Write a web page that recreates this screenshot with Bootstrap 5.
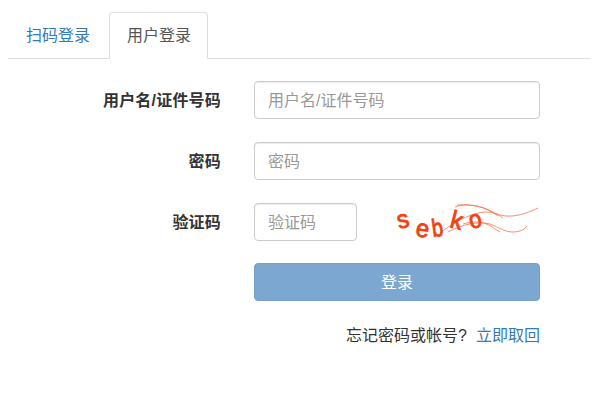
<!DOCTYPE html>
<html lang="zh"><head><meta charset="utf-8"><title>登录</title>
<link rel="stylesheet" href="https://cdn.jsdelivr.net/npm/bootstrap@5.3.0/dist/css/bootstrap.min.css">
<style>
body{font-family:"Liberation Sans","Noto Sans CJK SC",sans-serif;font-size:16px;color:#333;background:#fff;padding:12px 8px 0;}
.tabs-x{border-bottom:1px solid #ddd;height:47px;gap:1px;}
.tabs-x .nav-link{height:47px;padding:12px 17px;font-size:16px;line-height:22px;color:#337ab7;border:1px solid transparent;border-radius:4px 4px 0 0;margin:0;}
.tabs-x .nav-link.active{padding-right:16px;color:#555;background:#fff;border-color:#ddd #ddd #fff;}
.form-x{padding-top:22px;}
.row-x{height:38px;margin-bottom:23px;display:flex;align-items:center;}
.lab-x{width:213px;text-align:right;font-weight:700;color:#333;margin:0;padding-top:2px;font-size:16px;line-height:22px;letter-spacing:.2px;}
.fld-x{margin-left:33px;width:286px;flex:none;}
.ipt-x{height:38px;padding:7px 13px 5px;font-size:16px;color:#555;border:1px solid #ccc;border-radius:4px;box-shadow:inset 0 1px 1px rgba(0,0,0,.075);}
.ipt-x::placeholder{color:#999;opacity:1;}
.code-x{width:103px;}
.cap-x{display:block;margin-left:30px;flex:none;}
.btn-x{display:block;width:286px;height:38px;margin:-1px 0 0 246px;padding:2px 0 0;font-size:16px;color:#fff;background:#7ba7d0;border:1px solid #74a1cb;border-radius:4px;}
.btn-x:hover,.btn-x:focus{color:#fff;background:#7ba7d0;border-color:#74a1cb;}
.foot-x{width:532px;margin-top:24px;text-align:right;font-size:16px;line-height:22px;color:#333;}
.foot-x a{color:#337ab7;text-decoration:none;margin-left:9px;}
</style></head>
<body>
<ul class="nav tabs-x">
<li class="nav-item"><a class="nav-link" href="#">扫码登录</a></li>
<li class="nav-item"><a class="nav-link active" href="#">用户登录</a></li>
</ul>
<form class="form-x">
<div class="row-x"><label class="lab-x" for="u">用户名/证件号码</label><div class="fld-x"><input id="u" class="form-control ipt-x" placeholder="用户名/证件号码"></div></div>
<div class="row-x"><label class="lab-x" for="p">密码</label><div class="fld-x"><input id="p" class="form-control ipt-x" placeholder="密码"></div></div>
<div class="row-x"><label class="lab-x" for="c">验证码</label><div class="fld-x d-flex align-items-center"><input id="c" class="form-control ipt-x code-x" placeholder="验证码">
<svg class="cap-x" width="153" height="48" viewBox="387 198 153 48" fill="none">
<g stroke="#f4754a" stroke-width=".8">
<path d="M455 207C466 203 480 205 493 212C503 218 518 218 538 208"/>
<path d="M440 233C450 225 470 212 487 212C495 212 500 216 503 218"/>
<path d="M448 232C463 224 478 221 490 224C500 228 505 232 513 232C520 232 525 229 527 226"/>
<path d="M457 205C470 204 485 206 498 216"/>
<path d="M463 224C475 220 487 222 495 229L500 232"/>
</g>
<g fill="#ee4411" stroke="#ee4411" stroke-width=".9" font-family="Liberation Sans,sans-serif" font-size="25">
<text transform="translate(399 229) rotate(-14) scale(.95 1)">s</text>
<text transform="translate(415 236) rotate(8) scale(.95 1)">e</text>
<text transform="translate(433 237) rotate(-8) scale(.8 1)">b</text>
<text transform="translate(449 227) rotate(14) scale(.95 1)">k</text>
<text transform="translate(471 229) rotate(-14) scale(.9 1)">o</text>
</g>
</svg></div></div>
<button type="button" class="btn btn-x">登录</button>
<div class="foot-x">忘记密码或帐号?<a href="#">立即取回</a></div>
</form>
</body></html>
